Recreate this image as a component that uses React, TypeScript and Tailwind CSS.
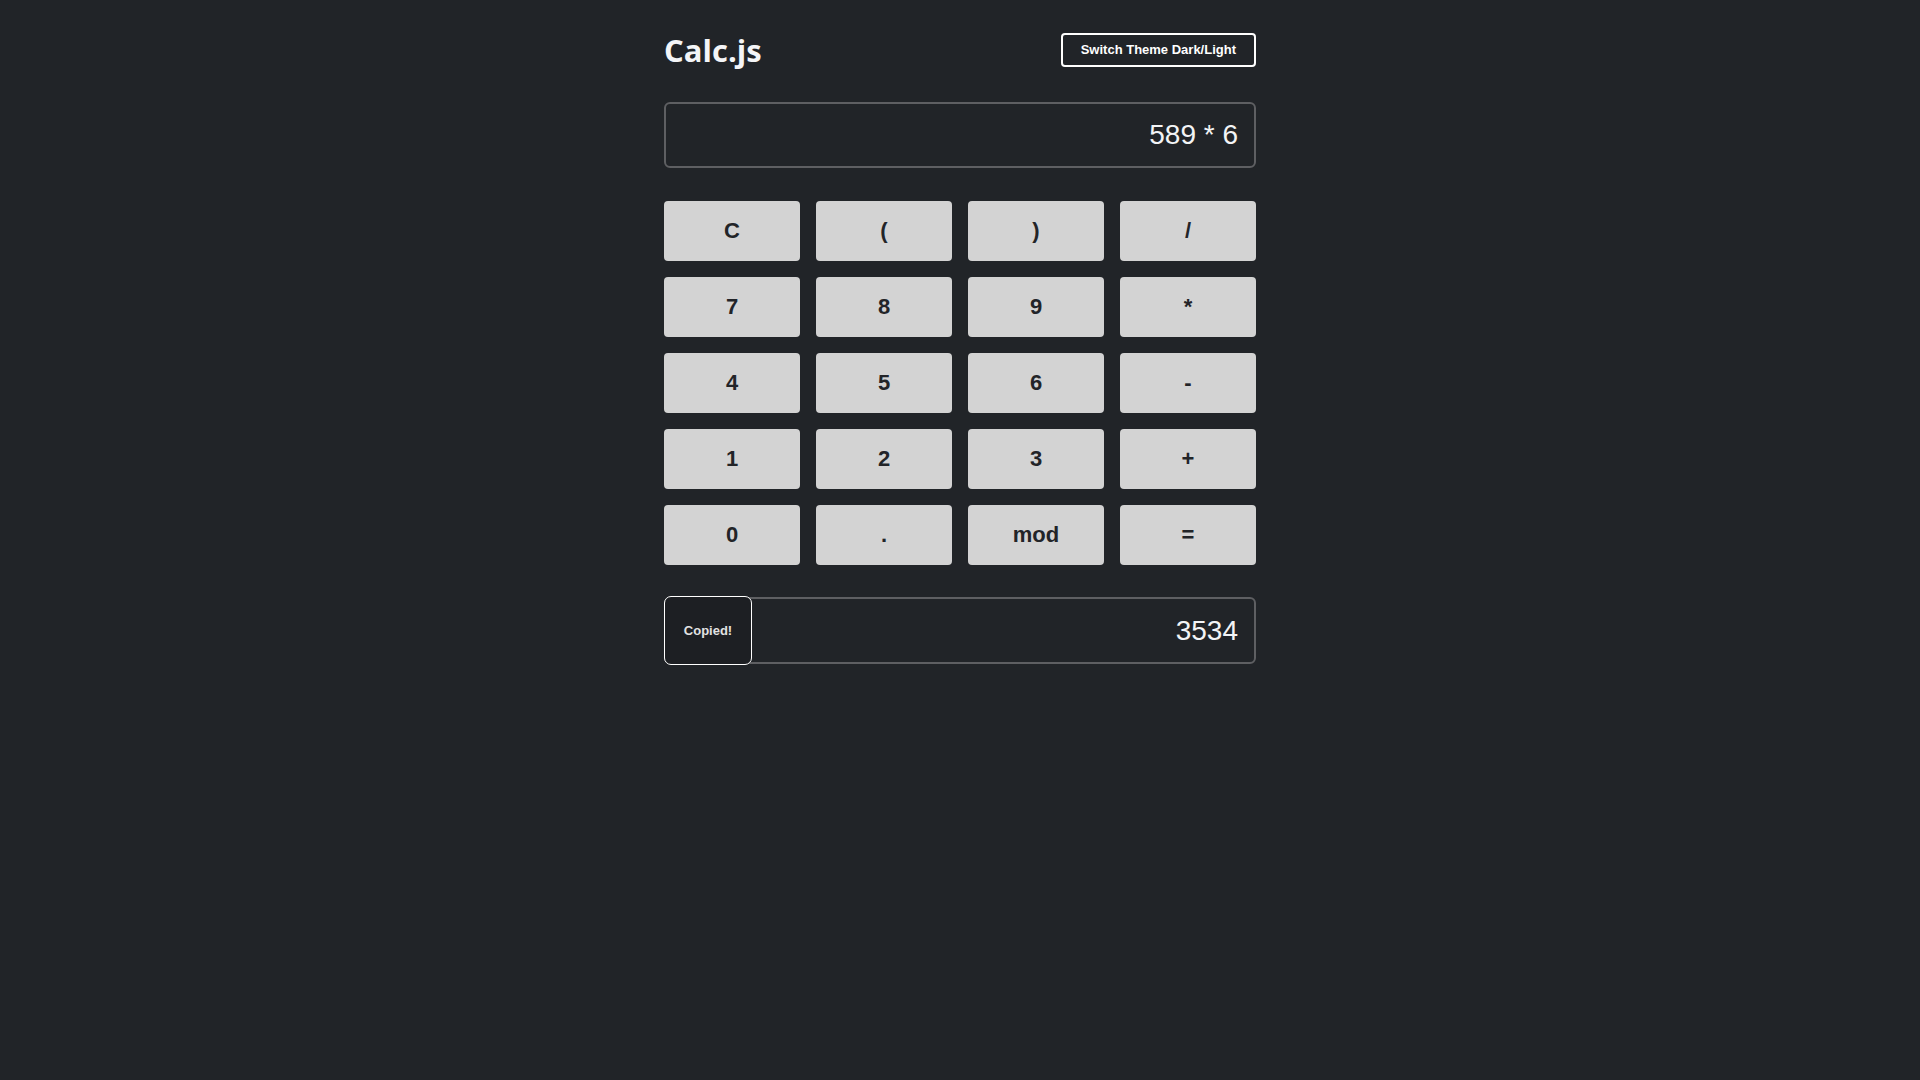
import React from 'react';

const keys: string[] = [
  'C', '(', ')', '/',
  '7', '8', '9', '*',
  '4', '5', '6', '-',
  '1', '2', '3', '+',
  '0', '.', 'mod', '=',
];

const App: React.FC = () => {
  return (
    <div className="min-h-screen w-full bg-[#212428] font-['Liberation_Sans',Arial,sans-serif]">
      <div className="w-[592px] mx-auto pt-[33px]">
        {/* Header */}
        <div className="flex items-center justify-between h-[34px]">
          <h1 className="font-['Open_Sans',sans-serif] font-bold text-[31px] leading-none text-[#f4f5f7]">
            Calc.js
          </h1>
          <button className="h-[34px] px-[18px] border-2 border-white rounded-[4px] text-white text-[13px] font-bold">
            Switch Theme Dark/Light
          </button>
        </div>

        {/* Expression display */}
        <div className="mt-[35px] h-[66px] border-2 border-[#5e5f62] rounded-[6px] flex items-center justify-end pr-[16px]">
          <span className="text-[28px] text-[#f3f4f6]">589 * 6</span>
        </div>

        {/* Keypad */}
        <div className="mt-[33px] grid grid-cols-4 gap-4">
          {keys.map((k) => (
            <button
              key={k}
              className="h-[60px] bg-[#d3d3d3] rounded-[4px] text-[22px] font-bold text-[#222428] pb-[1px]"
            >
              {k}
            </button>
          ))}
        </div>

        {/* Result */}
        <div className="relative mt-[32px]">
          <div className="h-[67px] border-2 border-[#5e5f62] rounded-[6px] flex items-center justify-end pr-[16px]">
            <span className="text-[28px] text-[#f3f4f6]">3534</span>
          </div>
          <button className="absolute left-0 top-[-1px] h-[69px] w-[88px] bg-[#1d1f23] border-[1.5px] border-white rounded-[7px] text-[13px] font-bold text-[#e2e2e2] pt-[1px]">
            Copied!
          </button>
        </div>
      </div>
    </div>
  );
};

export default App;
